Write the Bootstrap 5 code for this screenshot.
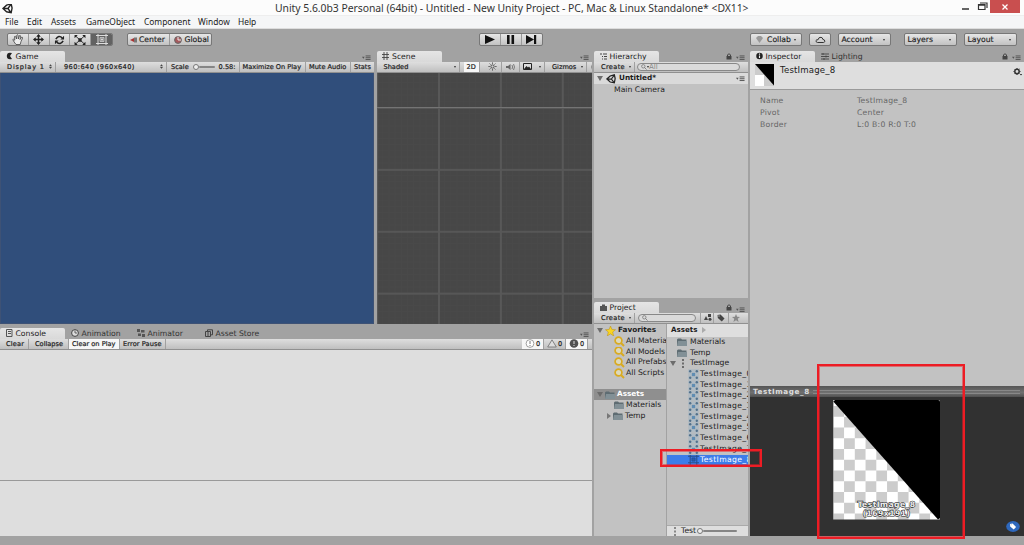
<!DOCTYPE html>
<html lang="en">
<head>
<meta charset="utf-8">
<title>Unity 5.6.0b3 Personal</title>
<link rel="stylesheet" href="https://cdn.jsdelivr.net/npm/bootstrap@5.3.0/dist/css/bootstrap.min.css">
<script src="https://cdn.jsdelivr.net/npm/bootstrap@5.3.0/dist/js/bootstrap.bundle.min.js"></script>
<style>
*{min-width:0}
body{width:1024px;height:545px;background:#a2a2a2;color:#1c1c1c;font:7.7px/10.67px "DejaVu Sans",sans-serif;overflow:hidden;white-space:nowrap}
svg{display:block;flex:none}
/* window frame */
.titlebar{height:15.5px;background:#fcfcfc;border-bottom:1px solid #eee;padding-left:2px}
.titlebar .caption{width:478px;margin-left:262px;font:10.4px/16px "Noto Sans",sans-serif;letter-spacing:-.035px;color:#333}
.closebtn{width:30px;height:13px;background:#c94f4f}
.menus{height:13px;background:#f5f6f7;font:8.4px/12px "Noto Sans",sans-serif;color:#222;border-bottom:1px solid #ddd;padding-left:5px}
.menus span{flex:none}
.menus span:nth-child(1){width:22px}.menus span:nth-child(2){width:24px}.menus span:nth-child(3){width:35px}.menus span:nth-child(4){width:58px}.menus span:nth-child(5){width:54px}.menus span:nth-child(6){width:40px}
/* main toolbar */
.tools{height:22px;padding:4.5px 7px 4.5px;background:#a2a2a2}
.ubtn{height:13px;border:1px solid #777;border-radius:2px;background:linear-gradient(#e6e6e6,#c2c2c2);flex:none;overflow:hidden}
.ubtn>span{height:100%}
.cell{width:20.8px;border-right:1px solid #999;display:flex;align-items:center;justify-content:center}
.cell:last-child{border:0}
.cell.on{background:#626262}
.drop{padding:0 5px 0 3px;display:flex;align-items:center;justify-content:space-between;color:#222;-webkit-text-stroke:.15px #222}
.drop span{padding-top:1px}
.dn{width:0;height:0;border:1.5px solid transparent;border-top:2.5px solid #333;border-bottom:0;flex:none}
.g1{margin-left:14px;width:85px}.g2{margin-left:267px}.g3{margin-left:auto;width:52px}.g4{margin-left:7px;width:22px}.g5{margin-left:6.5px;width:53px}.g6{margin-left:13px;width:53px}.g7{margin-left:7px;width:53.5px}
.half{width:50%;display:flex;align-items:center;gap:1px;padding:1px 0 0 2px;-webkit-text-stroke:.15px #222}
.half+.half{border-left:1px solid #999;padding-left:4px;gap:2px}
/* panels */
.left{width:592px}.mid{width:154px;margin-left:2px}.right{width:274px;margin-left:2px}
.work{height:485.5px}
.tabs{height:11px;flex:none;padding-right:3px}
.utab{height:11px;width:65px;background:linear-gradient(#e5e5e5,#d9d9d9);padding-left:5.5px;display:flex;align-items:center;gap:3px;line-height:11px;border-radius:2px 2px 0 0}
.utab.off{background:none;color:#333}
.utab.t2{width:66px}.utab.t3{width:68px}.utab.t4{width:90px}
.bar{height:11px;flex:none;background:linear-gradient(#dedede,#bfbfbf);border-bottom:1px solid #909090;font-size:6.6px;line-height:10px;-webkit-text-stroke:.2px #222;color:#222}
.bar>span{display:flex;align-items:center;justify-content:space-between;flex:none;height:10px;border-right:1px solid #a0a0a0;padding:0 3px}
.bar>.lit{background:#f6f6f6}
.toprow{height:273px}
.game{width:373.5px}.scene{width:215.5px;margin-left:3px}
#gbar span:nth-child(1){margin-left:3px;width:53px;padding-left:4px;letter-spacing:.8px}
#gbar span:nth-child(2){margin-left:4px;width:107px;padding-left:4px;letter-spacing:.42px}
#gbar span:nth-child(3){width:72.5px;gap:0;padding-left:4px}
#gbar span:nth-child(4){width:66.5px}#gbar span:nth-child(5){width:45px}
#gbar span:nth-child(6){width:22.5px;padding-right:0;border:0}
#sbar span:nth-child(1){margin-left:3px;width:80px;padding-left:4px}#sbar span:nth-child(2){margin-left:4px;width:16.5px}#sbar span:nth-child(3){margin-left:4px;width:18px}#sbar span:nth-child(4){width:18px}#sbar span:nth-child(5){width:25px}#sbar span:nth-child(6){margin-left:4px;width:38px}
#cbar span:nth-child(1){margin-left:3px;width:26px;letter-spacing:.2px}#cbar span:nth-child(2){margin-left:3px;width:37px}#cbar span:nth-child(3){width:51px}#cbar span:nth-child(4){width:46px;letter-spacing:.1px}#cbar .cnt{width:22px;gap:1px}
.gameview{background:#304e7b;border:1px solid #3e5275;border-top:0}
.sceneview{background-color:#474747;
 background-image:linear-gradient(#747474,#747474),linear-gradient(90deg,#585858 1.5px,transparent 1.5px),linear-gradient(#575757 1.5px,transparent 1.5px),linear-gradient(90deg,#494949 1px,transparent 1px),linear-gradient(#494949 1px,transparent 1px);
 background-size:100% 1px,61.9px 100%,100% 61.9px,6.19px 100%,100% 6.19px;background-position:0 34px,61px 0,0 34px,61px 0,0 34px;background-repeat:no-repeat,repeat,repeat,repeat,repeat}
.console{height:208.5px;margin-top:4px}
.log{background:#dedede;height:131px;border-bottom:1px solid #999}
.log2{background:#dedede}
.hier{height:248px}.pane{background:#c2c2c2}
.search{height:8px;border:1px solid #888;border-radius:5px;background:#dadada;color:#888;font-size:7px;font-style:normal;line-height:6px;-webkit-text-stroke:0;display:flex;align-items:center;padding-left:3px;flex:none}
.bar>.s1{width:103px;margin-left:2px}.bar>.s2{width:58px;margin:0 4px 0 3px}.s3{width:20px}
.bar>.mk{width:38px;margin-left:3px;padding-left:4px;letter-spacing:.35px}
.bar>.q1{width:14px;border-left:1px solid #a0a0a0}.bar>.q2{width:15px;color:#444}
.hrow{height:10.67px;display:flex;align-items:center;flex:none;overflow:hidden}
.hrow.scenehead{height:11.5px;background:#dadada;padding:1px 3px 0;gap:3px}
.obj{padding:1px 0 0 20px}
.tri{border:3px solid transparent;border-top:5px solid #6c6c6c;border-bottom:0;width:0;flex:none}
.tri.r{border:3px solid transparent;border-left:4.5px solid #777;border-right:0}
.proj{height:234.5px;margin-top:3.5px}
.body2{height:0}
.tree{width:73px;border-right:1px solid #a2a2a2;padding-top:1.5px}
.fav{padding-left:20px;gap:1px}.fld{padding-left:20px;gap:2px}
.sub{padding-left:13px;gap:2px}
.top1{padding-left:3px;gap:2px}.root{background:#8f8f8f;color:#fff}
.files{width:80.5px;overflow:hidden}
.files .hrow{padding-left:10px;gap:3px}
.files .crumb{height:13.3px;background:#dedede;font-weight:bold;padding-left:4px;gap:5px;font-size:7.1px}
.files .tex{padding-left:3px;gap:5px}
.files .kid{padding-left:21px;gap:1px;letter-spacing:.35px;height:10.7px}
.files .picked{background:#3d7dea;color:#fff}
.b1{font-weight:bold;font-size:7.3px}
.foot{height:11px;background:#dedede;border-top:1px solid #aaa;padding-left:6px;gap:4px}
.foot .knob{margin-left:-3px}.foot .track{width:34px;margin-left:-4px}
.knob{width:6px;height:6px;border:1px solid #777;border-radius:50%;background:#eee;flex:none}
.track{height:2px;background:#858585;border-radius:1px}
/* inspector */
.head{height:28px;background:#dedede;border-bottom:1px solid #9a9a9a;padding:2px 2px 0 5px;font-size:8.6px;line-height:11px;letter-spacing:.15px}
.head span{margin:1px 0 0 6px}
.props{height:296.5px;padding:5px 10px;color:#666;line-height:12.1px;letter-spacing:.22px}
.props b{width:97px;font-weight:normal;display:inline-block}
.prevbar{height:11px;background:linear-gradient(#555,#707070 60%,#505050);color:#ddd;font-weight:bold;font-size:7.2px;letter-spacing:.6px;padding:0 4px 0 3px;gap:3px;line-height:11px}
.prevbar i{height:4px;border:1px solid #888;border-width:1px 0;flex:1}
.preview{height:139px;background:#313131;position:relative}
.preview .art{position:absolute;left:83px;top:1.5px}
.preview .tagbtn{position:absolute;right:4px;bottom:4px}
/* annotation frames */
.note{position:absolute;border:2px solid #ed1c24;box-shadow:inset 0 0 0 1px rgba(237,28,36,.5)}
.n1{left:817px;top:364px;width:147.5px;height:175px}
.n2{left:660px;top:449px;width:102px;height:18px}
</style>
</head>
<body class="d-flex flex-column position-relative">
<svg width="0" height="0" class="position-absolute">
<defs>
<symbol id="logo" viewBox="0 0 12 12"><path d="M1 6 5 2.400 10 1l1 4.500-1 5L5 9.600ZM1 6h5.500M6.500 6 9.800 1.500M6.500 6 9.800 10.500" fill="none" stroke="#222" stroke-width="1.500"/></symbol>
<symbol id="menu" viewBox="0 0 10 6"><path d="M0 2h3L1.500 4Z" fill="#555"/><path d="M4 1h5.500M4 3h5.500M4 5h5.500" stroke="#555" stroke-width="1.100"/></symbol>
<symbol id="lock" viewBox="0 0 6 7"><path d="M.5 3h5v3.500h-5Z" fill="#444"/><path d="M1.500 3V1.800q1.500-2 3 0V3" fill="none" stroke="#444"/></symbol>
<symbol id="folder" viewBox="0 0 10 8"><path d="M0 1.500 1 .5h3l1 1h4.500V8H0Z" fill="#5e6c72"/><path d="M1 3h9v5H0Z" fill="#829096"/></symbol>
<symbol id="mag" viewBox="0 0 11 11"><circle cx="4.500" cy="4.500" r="3.400" fill="#dcd8bd" stroke="#d9ab22" stroke-width="1.700"/><path d="m7 7 3 3" stroke="#d9ab22" stroke-width="2"/></symbol>
<symbol id="sprite" viewBox="0 0 10 10"><path d="M0 0h10v10H0Z" fill="#aab6be" opacity=".6"/><path d="M2 0v10M8 0v10M0 2h10M0 8h10" stroke="#a9bccb" stroke-width=".8"/><path d="M3.500 3.500h3v3h-3Z" fill="#5f8db3"/><g fill="#54718a"><circle cx="2" cy="2" r="1.100"/><circle cx="8" cy="2" r="1.100"/><circle cx="2" cy="8" r="1.100"/><circle cx="8" cy="8" r="1.100"/></g></symbol>
<symbol id="spriteon" viewBox="0 0 10 10"><path d="M2 0v10M8 0v10M0 2h10M0 8h10" stroke="#294f8c"/><path d="M3.500 3.500h3v3h-3Z" fill="#2a5cae" stroke="#234a88" stroke-width=".6"/></symbol>
<symbol id="glass" viewBox="0 0 7 7"><circle cx="2.700" cy="2.700" r="2" fill="none" stroke="#777" stroke-width=".9"/><path d="m4 4 2.500 2.500" stroke="#777"/></symbol>
<symbol id="tag" viewBox="0 0 8 8"><path d="M.5 1 3.500.5l4 4-2.700 3L.8 4Z" fill="currentColor"/><circle cx="2" cy="2" r=".7" fill="#bbb"/></symbol>
<symbol id="updn" viewBox="0 0 4 6"><path d="M0 2.500 2 0l2 2.500ZM0 3.500h4L2 6Z" fill="#444"/></symbol>
</defs></svg>

<header class="titlebar d-flex">
 <svg width="11" height="11" class="mt-1"><use href="#logo" y="-1"/></svg>
 <span class="caption flex-shrink-0">Unity 5.6.0b3 Personal (64bit) - Untitled - New Unity Project - PC, Mac &amp; Linux Standalone* &lt;DX11&gt;</span>
 <svg width="28" height="13" class="ms-auto" viewBox="0 0 28 13"><path d="M0 9h7" stroke="#333" stroke-width="1.500"/><path d="M16.500 4.500h6.500v5h-6.500ZM18 3h7v5M16.500 5.200h6.500" fill="none" stroke="#333" stroke-width="1.200"/></svg>
 <span class="closebtn d-flex align-items-center justify-content-center flex-shrink-0 me-1"><svg width="6" height="6"><path d="m.5.5 5 5m0-5-5 5" stroke="#fff" stroke-width="1.300"/></svg></span>
</header>
<nav class="menus d-flex"><span>File</span><span>Edit</span><span>Assets</span><span>GameObject</span><span>Component</span><span>Window</span><span>Help</span></nav>
<section class="tools d-flex">
 <div class="ubtn d-flex">
  <span class="cell"><svg width="12" height="11" viewBox="0 0 12 11"><path d="M4 10.500Q2 8 .8 5.600q.6-1 2 .6L2.500 2.500q.8-1 1.300.3L4.500 5 4.800 1.200q.8-1 1.300 0L6.300 5 7.500 1.600q1-.5 1.100.5L8 5.500l1.700-2.300q1-.1.900.8L9 7.500l-.8 3Z" fill="#eee" stroke="#444" stroke-width=".8"/></svg></span>
  <span class="cell"><svg width="11" height="11" viewBox="0 0 12 12"><path d="M6 1v10M1 6h10" stroke="#222" stroke-width="1.600"/><path d="M6 0 8.500 3h-5ZM6 12 3.500 9h5ZM0 6l3-2.500v5ZM12 6 9 3.500v5Z" fill="#222"/></svg></span>
  <span class="cell"><svg width="11" height="10" viewBox="0 0 12 11"><path d="M2 4.500Q5-.5 9 3M10 6.500Q7 11.500 3 8" fill="none" stroke="#222" stroke-width="1.700"/><path d="M11 .8V5H7ZM1 10.200V6h4Z" fill="#222"/></svg></span>
  <span class="cell"><svg width="12" height="10" viewBox="0 0 12 11"><path d="m1 1 10 9M11 1 1 10" stroke="#222"/><path d="M0 0h3.500L0 3.500ZM12 0v3.500L8.500 0ZM0 11V7.500L3.500 11ZM12 11H8.500L12 7.500ZM4.200 3.700h3.600v3.600H4.200Z" fill="#222"/></svg></span>
  <span class="cell on"><svg width="12" height="11" viewBox="0 0 12 11"><path d="M2 0v11M10 0v11M0 1.500h12M0 9.500h12" stroke="#ddd"/><path d="M4 3.500h4v4H4Z" fill="#888" stroke="#ccc" stroke-width=".8"/><circle cx="6" cy="5.500" r="1" fill="#ddd"/></svg></span>
 </div>
 <div class="ubtn d-flex g1"><span class="half"><svg width="8" height="6"><path d="M0 3 4 1v4Z" fill="#a33"/><path d="M4 .5h3v5H4Z" fill="#777"/></svg>Center</span><span class="half"><svg width="8" height="8"><circle cx="4" cy="4" r="3.400" fill="#a75a5d" stroke="#666"/><path d="M4 .8v3.200h3" stroke="#eee" fill="none"/></svg>Global</span></div>
 <div class="ubtn d-flex g2">
  <span class="cell"><svg width="10" height="9"><path d="M0 0 10 4.500 0 9Z" fill="#111"/></svg></span>
  <span class="cell"><svg width="8" height="9"><path d="M0 0h2.600v9H0ZM4.500 0h2.600v9H4.500Z" fill="#111"/></svg></span>
  <span class="cell"><svg width="11" height="9"><path d="M0 0 8 4.500 0 9ZM8 0h2.200v9H8Z" fill="#111"/></svg></span>
 </div>
 <div class="ubtn drop g3"><svg width="10" height="7"><path d="M2 2 4 0h3l2 2-3.500 5Z" fill="#999"/></svg><span>Collab</span><i class="dn"></i></div>
 <div class="ubtn g4 d-flex align-items-center justify-content-center"><svg width="11" height="8"><path d="M2.500 6.500Q.5 6 1 4.500 1.500 3.500 3 3.800 3.500 1 6 1.300q1.700.3 1.800 2Q10 3.700 9.800 5.300 9.500 6.500 8.500 6.500Z" fill="none" stroke="#333"/></svg></div>
 <div class="ubtn drop g5"><span>Account</span><i class="dn"></i></div>
 <div class="ubtn drop g6"><span>Layers</span><i class="dn"></i></div>
 <div class="ubtn drop g7"><span>Layout</span><i class="dn"></i></div>
</section>

<main class="work d-flex flex-shrink-0">
 <div class="left d-flex flex-column">
  <div class="toprow d-flex">
   <div class="game d-flex flex-column">
    <div class="tabs d-flex align-items-center"><div class="utab"><svg width="7" height="8"><path d="M6 1Q1-.5.800 4 1 8.300 6 7L4 4Z" fill="#222"/></svg>Game</div><svg width="9" height="5.500" class="ms-auto mt-1"><use href="#menu"/></svg></div>
    <div class="bar d-flex" id="gbar"><span>Display 1<svg width="3" height="5"><use href="#updn"/></svg></span><span>960:640 (960x640)<svg width="3" height="5"><use href="#updn"/></svg></span><span>Scale<i class="knob ms-1"></i><i class="track flex-fill me-1"></i>0.58:</span><span>Maximize On Play</span><span>Mute Audio</span><span>Stats</span></div>
    <div class="gameview flex-fill"></div>
   </div>
   <div class="scene d-flex flex-column">
    <div class="tabs d-flex align-items-center"><div class="utab"><svg width="7" height="8"><path d="M2 0v8M5 0v8M0 2.500h7M0 5.500h7" stroke="#444" stroke-width=".9"/></svg>Scene</div><svg width="9" height="5.500" class="ms-auto mt-1"><use href="#menu"/></svg></div>
    <div class="bar d-flex overflow-hidden" id="sbar"><span>Shaded<i class="dn"></i></span><span class="lit">2D</span><span class="justify-content-center"><svg width="9" height="9" viewBox="-5 -5 10 10"><circle r="1.800" fill="none" stroke="#444"/><path d="M0-4.500v1.500M0 3v1.500M-4.500 0H-3M3 0h1.500M-3.200-3.200l1 1M2.200 2.200l1 1M-3.200 3.200l1-1M2.200-2.200l1-1" stroke="#444"/></svg></span><span class="justify-content-center"><svg width="9" height="8"><path d="M0 3h2l2.500-2v6L2 5H0Z" fill="#666"/><path d="M6 2q1.200 2 0 4M7.500 1q2 3 0 6" fill="none" stroke="#666" stroke-width=".8"/></svg></span><span><svg width="9" height="7"><path d="M.5.500h8v6h-8Z" fill="#ddd" stroke="#222"/><path d="m1 6 2.500-3L5 4.500l1-1L8 6Z" fill="#222"/></svg><i class="dn"></i></span><span>Gizmos<i class="dn"></i></span><span class="border-0 p-0 ms-1"><i class="search s3"></i></span></div>
    <div class="sceneview flex-fill"></div>
   </div>
  </div>
  <div class="console d-flex flex-column">
   <div class="tabs d-flex align-items-center"><div class="utab"><svg width="7" height="8"><path d="M.5.500h5.500v7H.5ZM2 2.500h3M2 4.500h3" fill="none" stroke="#555"/></svg>Console</div>
    <div class="utab off t2"><svg width="8" height="8"><circle cx="4" cy="4" r="3.400" fill="#ddd" stroke="#444"/><path d="M4 1.500V4h2" fill="none" stroke="#444" stroke-width=".8"/></svg>Animation</div>
    <div class="utab off t3"><svg width="8" height="8"><path d="M0 0h3v3H0ZM4 1h3.500v2.500H4ZM1 4.500h3V7H1ZM5 5h3v3H5Z" fill="#555"/></svg>Animator</div>
    <div class="utab off t4"><svg width="8" height="8"><path d="M.5 2.500h5v5h-5ZM2.500 2.500V.8h5v5h-2M2 4h2M2 6h2" fill="none" stroke="#444"/></svg>Asset Store</div>
    <svg width="9" height="5.500" class="ms-auto mt-1"><use href="#menu"/></svg></div>
   <div class="bar d-flex" id="cbar"><span>Clear</span><span>Collapse</span><span class="lit">Clear on Play</span><span>Error Pause</span>
    <span class="lit cnt ms-auto"><svg width="10" height="9"><circle cx="5" cy="4.500" r="3.900" fill="#fff" stroke="#888" stroke-width=".8"/><path d="M5 2v3M5 6v1" stroke="#777"/></svg>0</span><span class="cnt"><svg width="10" height="9"><path d="M5 .8 9.300 8H.7Z" fill="#ddd" stroke="#777" stroke-width=".9"/></svg>0</span><span class="lit cnt me-1"><svg width="10" height="9"><circle cx="5" cy="4.500" r="4.300" fill="#505050"/><path d="M5 2v3M5 6v1" stroke="#ddd"/></svg>0</span></div>
   <div class="log flex-shrink-0"></div><div class="log2 flex-fill"></div>
  </div>
 </div>

 <div class="mid d-flex flex-column">
  <div class="hier d-flex flex-column">
   <div class="tabs d-flex align-items-center"><div class="utab"><svg width="7" height="7"><path d="M0 1h2M3 1h5M2 3.500h1M4 3.500h4M2 6h1M4 6h4" stroke="#444"/></svg>Hierarchy</div><svg width="6" height="7" class="ms-auto me-1"><use href="#lock"/></svg><svg width="9" height="5.500" class="mt-1"><use href="#menu"/></svg></div>
   <div class="bar d-flex align-items-center"><span class="mk">Create<i class="dn"></i></span><i class="search s1"><svg width="6" height="6"><use href="#glass"/></svg><b class="dn"></b>All</i></div>
   <div class="pane flex-fill"><div class="hrow b1 scenehead"><i class="tri"></i><svg width="10" height="10"><use href="#logo"/></svg>Untitled*<svg width="9" height="5.500" class="ms-auto"><use href="#menu"/></svg></div><div class="hrow obj">Main Camera</div></div>
  </div>
  <div class="proj d-flex flex-column">
   <div class="tabs d-flex align-items-center"><div class="utab"><svg width="7" height="7"><path d="M0 2h2V.5h3V2h2v5H0Z" fill="#555"/></svg>Project</div><svg width="6" height="7" class="ms-auto me-1"><use href="#lock"/></svg><svg width="9" height="5.500" class="mt-1"><use href="#menu"/></svg></div>
   <div class="bar d-flex align-items-center"><span class="mk">Create<i class="dn"></i></span><i class="search s2"><svg width="6" height="6"><use href="#glass"/></svg></i><span class="q1"><svg width="8" height="7"><path d="M0 6 2 2l2 4ZM4 0h3v3H4Z" fill="#444"/><circle cx="6" cy="5.300" r="1.500" fill="#444"/></svg></span><span class="q2"><svg width="8" height="8"><use href="#tag"/></svg></span><span class="border-0"><svg width="8" height="8" viewBox="0 0 10 10"><path d="m5 0 1.400 3.400L10 3.700 7.200 6l1 4L5 7.800 1.800 10l1-4L0 3.700l3.600-.3Z" fill="#888"/></svg></span></div>
   <div class="body2 d-flex flex-fill pane">
    <div class="tree flex-shrink-0">
     <div class="hrow b1 top1"><i class="tri"></i><svg width="11" height="10" viewBox="0 0 10 10"><path d="m5 0 1.400 3.400L10 3.700 7.200 6l1 4L5 7.800 1.800 10l1-4L0 3.700l3.600-.3Z" fill="#f9d423" stroke="#b88f16" stroke-width=".5"/></svg>Favorites</div>
     <div class="hrow fav"><svg width="11" height="11"><use href="#mag"/></svg>All Materials</div><div class="hrow fav"><svg width="11" height="11"><use href="#mag"/></svg>All Models</div><div class="hrow fav"><svg width="11" height="11"><use href="#mag"/></svg>All Prefabs</div><div class="hrow fav"><svg width="11" height="11"><use href="#mag"/></svg>All Scripts</div>
     <div class="hrow"></div>
     <div class="hrow b1 top1 root"><i class="tri"></i><svg width="10" height="8"><use href="#folder"/></svg>Assets</div>
     <div class="hrow fld"><svg width="10" height="8"><use href="#folder"/></svg>Materials</div>
     <div class="hrow sub"><i class="tri r"></i><svg width="10" height="8"><use href="#folder"/></svg>Temp</div>
    </div>
    <div class="files d-flex flex-column">
     <div class="hrow crumb">Assets<i class="tri r opacity-50"></i></div>
     <div class="hrow"><svg width="10" height="8"><use href="#folder"/></svg>Materials</div>
     <div class="hrow"><svg width="10" height="8"><use href="#folder"/></svg>Temp</div>
     <div class="hrow tex"><i class="tri"></i><svg width="4" height="9"><path d="M2 0v9" stroke="#333" stroke-width="1.200" stroke-dasharray="2 1.500"/></svg>TestImage</div>
     <div class="hrow kid"><svg width="11" height="11"><use href="#sprite"/></svg>TestImage_0</div>
     <div class="hrow kid"><svg width="11" height="11"><use href="#sprite"/></svg>TestImage_1</div>
     <div class="hrow kid"><svg width="11" height="11"><use href="#sprite"/></svg>TestImage_2</div>
     <div class="hrow kid"><svg width="11" height="11"><use href="#sprite"/></svg>TestImage_3</div>
     <div class="hrow kid"><svg width="11" height="11"><use href="#sprite"/></svg>TestImage_4</div>
     <div class="hrow kid"><svg width="11" height="11"><use href="#sprite"/></svg>TestImage_5</div>
     <div class="hrow kid"><svg width="11" height="11"><use href="#sprite"/></svg>TestImage_6</div>
     <div class="hrow kid"><svg width="11" height="11"><use href="#sprite"/></svg>TestImage_7</div>
     <div class="hrow kid picked"><svg width="11" height="11"><use href="#spriteon"/></svg>TestImage_8</div>
     <div class="foot d-flex align-items-center mt-auto"><svg width="4" height="9"><path d="M2 0v9" stroke="#333" stroke-dasharray="2 1.500"/></svg><span>Test</span><i class="knob"></i><i class="track"></i></div>
    </div>
   </div>
  </div>
 </div>

 <aside class="right d-flex flex-column">
  <div class="tabs d-flex align-items-center"><div class="utab"><svg width="7" height="8" viewBox="0 0 8 8"><circle cx="4" cy="4" r="3.700" fill="#222"/><path d="M4 1.200v1.300M4 3.300v3" stroke="#eee" stroke-width="1.300"/></svg>Inspector</div><div class="utab off"><svg width="8" height="7"><path d="M0 1h8M0 3.500h8M0 6h8M2 0v2M5 2.500v2M3 5v2" stroke="#444" stroke-width=".9"/></svg>Lighting</div><svg width="6" height="7" class="ms-auto me-1"><use href="#lock"/></svg><svg width="9" height="5.500" class="mt-1"><use href="#menu"/></svg></div>
  <div class="head d-flex flex-shrink-0"><svg width="19" height="22"><path d="M0 0h19v22H0Z" fill="#ccc"/><path d="M0 11h9v11H0Z" fill="#fff"/><path d="M0 0h19v21.500Z"/></svg><span>TestImage_8</span><svg width="9" height="8" class="ms-auto mt-1"><circle cx="4" cy="3.500" r="2.200" fill="none" stroke="#333" stroke-width="1.500"/><path d="M4 0v1M4 6v1M.5 3.500h1M6.500 3.500h1M1.500 1l.7.700M5.800 5.300l.7.700M1.500 6l.7-.7M5.800 1.700l.7-.7" stroke="#333"/><path d="M7 6h2l-1 1.500Z"/></svg></div>
  <div class="props pane flex-shrink-0"><div><b>Name</b>TestImage_8</div><div><b>Pivot</b>Center</div><div><b>Border</b>L:0 B:0 R:0 T:0</div></div>
  <div class="prevbar d-flex align-items-center">TestImage_8<i></i></div>
  <div class="preview">
   <svg class="art" width="108" height="121" viewBox="0 0 108 121"><defs><pattern id="chk" x="0.300" y="7" width="21.500" height="21.500" patternUnits="userSpaceOnUse"><path d="M0 0h21.500v21.500H0Z" fill="#fff"/><path d="M0 0h10.750v10.750H0ZM10.750 10.750h10.750v10.750H10.750Z" fill="#ccc"/></pattern></defs><path d="M.3 1h106.500v119.500H.3Z" fill="url(#chk)"/><path d="M.3 2.500 2 1h103q2 0 2 2v116l-2 1.500Z"/>
   <g font-family="DejaVu Sans" font-weight="bold" font-size="7.700" letter-spacing=".4" text-anchor="middle" fill="#eee" stroke="#222" stroke-width="1.100" paint-order="stroke"><text x="53.500" y="108">TestImage_8</text><text x="53.500" y="116.500">(169x191)</text></g></svg>
   <svg class="tagbtn" width="14" height="11"><ellipse cx="7" cy="5.500" rx="6.800" ry="5.400" fill="#2e68bd"/><g transform="translate(3.500 2)" color="#fff"><use href="#tag" width="7" height="7"/></g></svg>
  </div>
 </aside>
</main>
<div class="note n1"></div><div class="note n2"></div>
</body>
</html>
